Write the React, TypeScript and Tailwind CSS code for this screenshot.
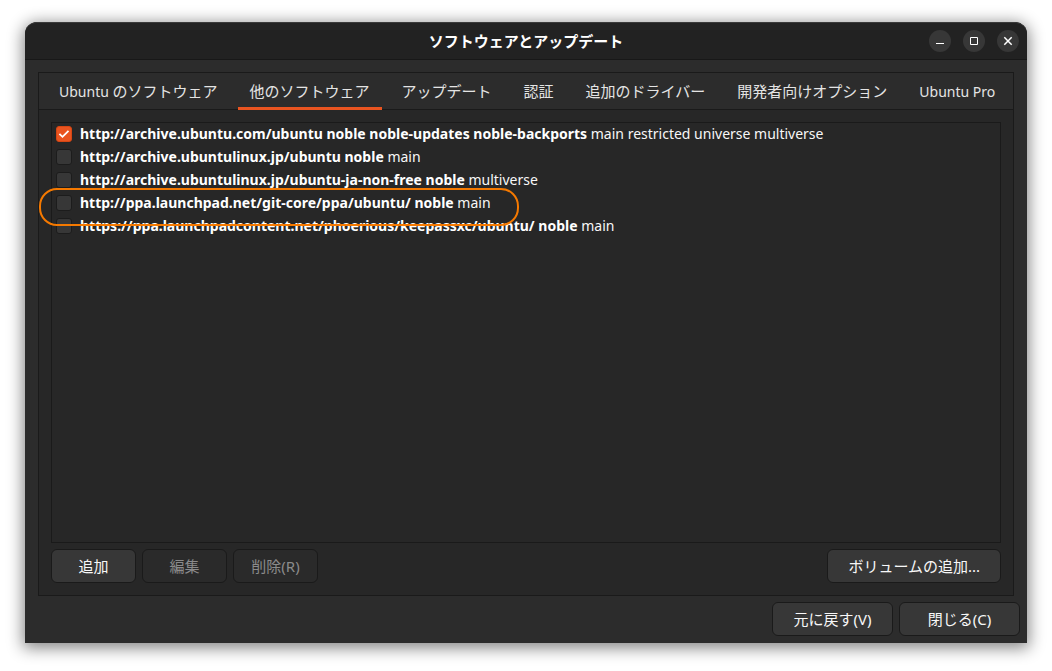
import { useState } from "react";

const tabs = [
  { latin: "Ubuntu ", text: "のソフトウェア" },
  { text: "他のソフトウェア" },
  { text: "アップデート" },
  { text: "認証" },
  { text: "追加のドライバー" },
  { text: "開発者向けオプション" },
  { latin: "Ubuntu Pro", text: "" },
];

type Source = { uri: string; components: string; enabled: boolean; marked?: boolean };

const initialSources: Source[] = [
  {
    uri: "http://archive.ubuntu.com/ubuntu noble noble-updates noble-backports",
    components: "main restricted universe multiverse",
    enabled: true,
  },
  { uri: "http://archive.ubuntulinux.jp/ubuntu noble", components: "main", enabled: false },
  { uri: "http://archive.ubuntulinux.jp/ubuntu-ja-non-free noble", components: "multiverse", enabled: false },
  { uri: "http://ppa.launchpad.net/git-core/ppa/ubuntu/ noble", components: "main", enabled: false, marked: true },
  { uri: "https://ppa.launchpadcontent.net/phoerious/keepassxc/ubuntu/ noble", components: "main", enabled: false },
];

function WindowButton({ label, children }: { label: string; children: React.ReactNode }) {
  return (
    <button type="button" aria-label={label} className="flex size-[22px] items-center justify-center rounded-full bg-[#373737]">
      <svg viewBox="0 0 16 16" className="size-4" fill="none" stroke="#ffffff" aria-hidden="true">
        {children}
      </svg>
    </button>
  );
}

function TitleBar() {
  return (
    <header className="grid h-[38px] grid-cols-[1fr_auto_1fr] items-center rounded-t-xl border-t border-b border-t-[#3a3a3a] border-b-[#181818] bg-[#222222] px-2">
      <h1 className="col-start-2 font-bold text-white">ソフトウェアとアップデート</h1>
      <div className="flex justify-end gap-3">
        <WindowButton label="最小化">
          <path d="M4 10.5h8" />
        </WindowButton>
        <WindowButton label="最大化">
          <path d="M4.5 4.5h7v7h-7z" />
        </WindowButton>
        <WindowButton label="閉じる">
          <path d="M4.3 4.3l7.4 7.4M11.7 4.3l-7.4 7.4" strokeWidth="1.5" />
        </WindowButton>
      </div>
    </header>
  );
}

function PushButton({ children, disabled, size }: { children: React.ReactNode; disabled?: boolean; size: string }) {
  return (
    <button
      type="button"
      disabled={disabled}
      className={`h-[34px] rounded-md border border-[#1a1a1a] bg-[#373737] text-center text-[#f7f7f7] disabled:bg-[#2a2a2a] disabled:text-[#8b8b8b] ${size}`}
    >
      {children}
    </button>
  );
}

function SourceRow({ source, onToggle }: { source: Source; onToggle: () => void }) {
  return (
    <li className="relative h-[23px] pb-px pl-1">
      <label className="flex h-full items-center gap-2 whitespace-nowrap">
        <span className="grid size-4 place-items-center">
          <input
            type="checkbox"
            checked={source.enabled}
            onChange={onToggle}
            className="col-start-1 row-start-1 size-4 appearance-none rounded-[3px] border border-[#1c1c1c] bg-[#373737] checked:border-[#d64613] checked:bg-[#e95420]"
          />
          {source.enabled && (
            <svg viewBox="0 0 16 16" className="pointer-events-none col-start-1 row-start-1 size-4" fill="none" stroke="#ffffff" strokeWidth="1.8" aria-hidden="true">
              <path d="M3.4 7.8l3.1 3 6-6" />
            </svg>
          )}
        </span>
        <span className="text-sm leading-6 text-[#f7f7f7]">
          <b className="font-bold text-white">{source.uri}</b> {source.components}
        </span>
      </label>
      {source.marked && (
        <span className="pointer-events-none absolute -top-1 -bottom-[11px] -left-[13px] z-10 w-[480px] rounded-[18px] border-2 border-[#f57900]" />
      )}
    </li>
  );
}

export default function App() {
  const [active, setActive] = useState(1);
  const [sources, setSources] = useState(initialSources);
  const toggle = (index: number) =>
    setSources(sources.map((s, i) => (i === index ? { ...s, enabled: !s.enabled } : s)));

  return (
    <div className="flex min-h-screen flex-col bg-white px-[25px] pt-[22px] pb-7 font-['Noto_Sans','Noto_Sans_CJK_JP',sans-serif] text-[15px] leading-5">
      <div className="flex flex-1 flex-col rounded-t-xl bg-[#2c2c2c] shadow-[0_3px_16px_2px_rgba(0,0,0,0.48)]">
        <TitleBar />
        <main className="flex flex-1 flex-col px-[13px] pt-3">
          <section className="flex flex-1 flex-col border border-[#1a1a1a] bg-[#272727]">
            <div role="tablist" className="flex h-[37px] gap-2 border-b border-[#1a1a1a] bg-[#2c2c2c] px-2">
              {tabs.map((tab, i) => (
                <button
                  key={i}
                  type="button"
                  role="tab"
                  aria-selected={i === active}
                  onClick={() => setActive(i)}
                  className="-mb-px border-b-3 border-transparent px-3 pt-0.5 whitespace-pre text-[#e4e4e4] aria-selected:border-[#e95420]"
                >
                  {tab.latin && <span className="text-sm">{tab.latin}</span>}
                  {tab.text}
                </button>
              ))}
            </div>
            <div role="tabpanel" className="flex flex-1 flex-col gap-1.5 p-3">
              <ul className="flex-1 border border-[#1a1a1a]">
                {sources.map((source, i) => (
                  <SourceRow key={source.uri} source={source} onToggle={() => toggle(i)} />
                ))}
              </ul>
              <div className="flex gap-1.5">
                <PushButton size="w-[85px]">追加</PushButton>
                <PushButton size="w-[85px]" disabled>
                  編集
                </PushButton>
                <PushButton size="w-[85px]" disabled>
                  削除(R)
                </PushButton>
                <div className="ml-auto flex">
                  <PushButton size="px-5">ボリュームの追加...</PushButton>
                </div>
              </div>
            </div>
          </section>
        </main>
        <footer className="flex justify-end gap-1.5 px-[7px] pt-1.5 pb-[7px]">
          <PushButton size="w-[121px]">元に戻す(V)</PushButton>
          <PushButton size="w-[121px]">閉じる(C)</PushButton>
        </footer>
      </div>
    </div>
  );
}
